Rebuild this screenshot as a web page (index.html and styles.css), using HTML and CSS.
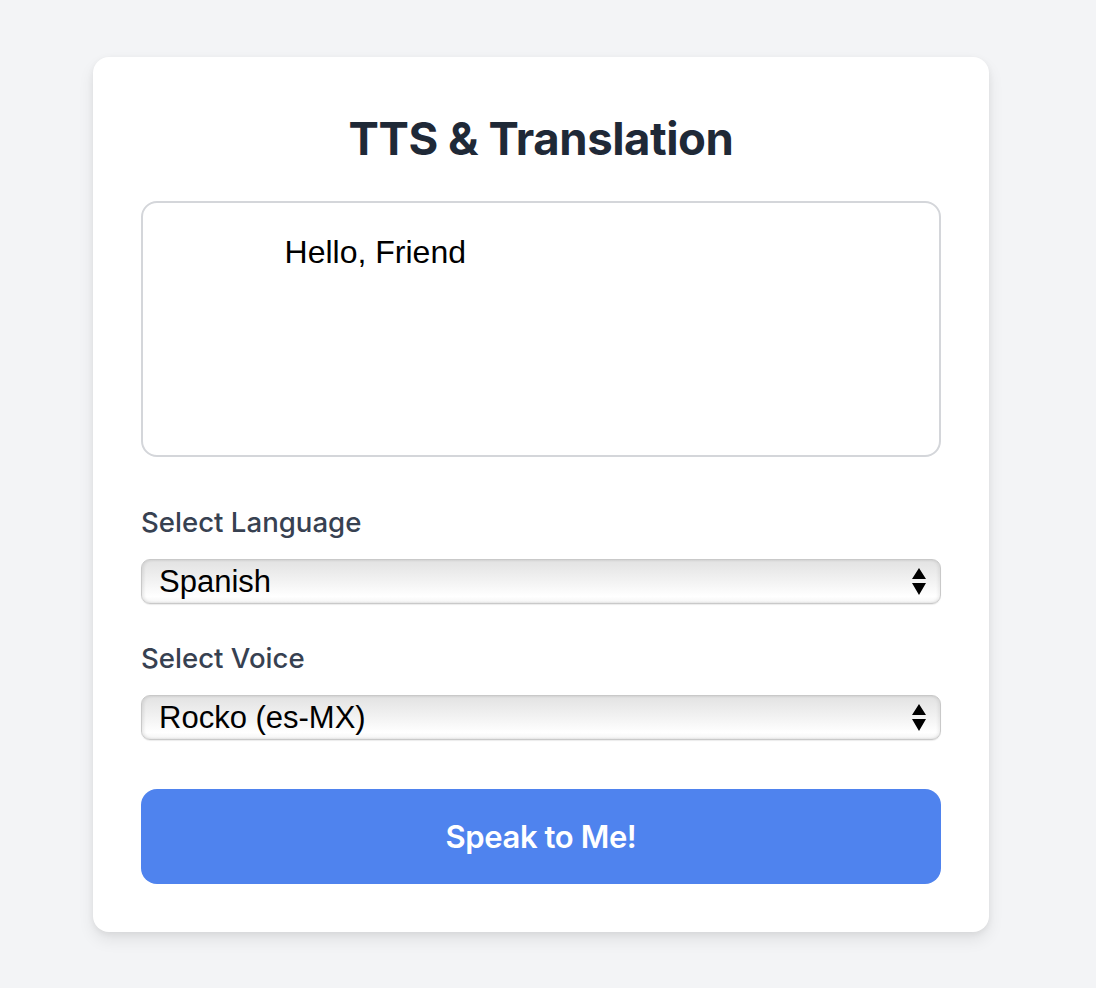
FILE: index.html
```html
<!DOCTYPE html>
<html lang="en">
<head>
<meta charset="utf-8">
<title>TTS &amp; Translation</title>
<link rel="stylesheet" href="styles.css">
</head>
<body>
<main class="card">
  <h1 class="title">TTS &amp; Translation</h1>
  <textarea class="input-text">             Hello, Friend</textarea>
  <label class="field-label" for="lang">Select Language</label>
  <div class="select-wrap">
    <select id="lang" class="select"><option>Spanish</option></select>
    <svg class="select-arrows" width="16" height="28" viewBox="0 0 16 28"><path d="M8 0 L15 11 L1 11 Z M1 15 L15 15 L8 27 Z" fill="#000"/></svg>
  </div>
  <label class="field-label" for="voice">Select Voice</label>
  <div class="select-wrap">
    <select id="voice" class="select"><option>Rocko (es-MX)</option></select>
    <svg class="select-arrows" width="16" height="28" viewBox="0 0 16 28"><path d="M8 0 L15 11 L1 11 Z M1 15 L15 15 L8 27 Z" fill="#000"/></svg>
  </div>
  <button class="speak-btn">Speak to Me!</button>
</main>
</body>
</html>
```
FILE: styles.css
```css
* { box-sizing: border-box; }
html, body { margin: 0; padding: 0; }
body {
  background: #f3f4f6;
  font-family: Inter, "Noto Sans", sans-serif;
  min-height: 988px;
  padding-top: 57px;
}
.card {
  width: 896px;
  margin-left: 93px;
  background: #fff;
  border-radius: 16px;
  padding: 48px;
  box-shadow: 0 8px 16px rgba(0,0,0,0.08), 0 2px 6px rgba(0,0,0,0.06);
  display: flex;
  flex-direction: column;
}
.title {
  margin: 2px 0 30px;
  font-size: 45.5px;
  line-height: 64px;
  font-weight: 700;
  color: #1f2937;
  text-align: center;
  letter-spacing: -0.45px;
}
.input-text {
  display: block;
  width: 100%;
  height: 256px;
  border: 2px solid #d4d6da;
  border-radius: 16px;
  padding: 25px 24px 24px 26px;
  font-family: "Liberation Sans", Arial, sans-serif;
  font-size: 32px;
  line-height: 48px;
  color: #000;
  resize: none;
  margin: 0 0 45px;
  outline: none;
}
.field-label {
  display: block;
  font-size: 27.6px;
  line-height: 40px;
  font-weight: 500;
  color: #374151;
  margin-bottom: 17px;
}
.select-wrap {
  position: relative;
  margin-bottom: 34px;
}
.select-wrap:last-of-type { margin-bottom: 49px; }
.select {
  appearance: none;
  -webkit-appearance: none;
  display: block;
  width: 100%;
  height: 45px;
  margin: 0;
  border: 1px solid #c9c9c9;
  border-radius: 9px;
  padding: 0 0 0 17px;
  font-family: "Liberation Sans", Arial, sans-serif;
  font-size: 31px;
  color: #000;
  background: linear-gradient(to bottom, #e2e2e2 0%, #f1f1f1 45%, #ffffff 85%, #f4f4f4 100%);
  box-shadow: inset 2px 0 3px rgba(0,0,0,0.08), inset -2px 0 3px rgba(0,0,0,0.06), 0 1px 1px rgba(0,0,0,0.08);
  outline: none;
}
.select-arrows {
  position: absolute;
  right: 14px;
  top: 9px;
  pointer-events: none;
}
.speak-btn {
  display: block;
  width: 100%;
  height: 95px;
  border: none;
  border-radius: 16px;
  background: #4f83ee;
  color: #fff;
  font-family: Inter, "Noto Sans", sans-serif;
  font-size: 31px;
  font-weight: 600;
  letter-spacing: -0.4px;
  cursor: pointer;
}
```
